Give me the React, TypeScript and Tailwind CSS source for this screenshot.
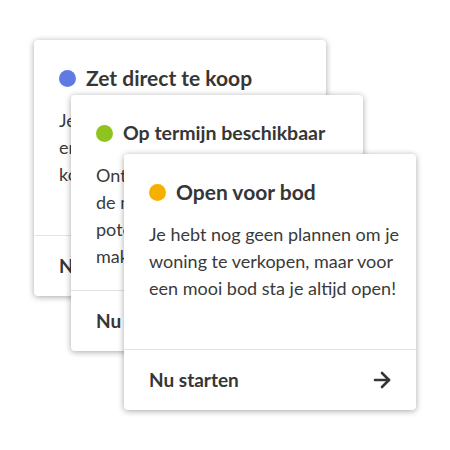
import { ArrowRight } from 'lucide-react'

type CardProps = {
  dot: string
  title: string
  titleSize: string
  lines: string[]
  offset: string
}

function Card({ dot, title, titleSize, lines, offset }: CardProps) {
  return (
    <div
      className={`col-start-1 row-start-1 flex h-[256px] w-[292px] flex-col overflow-hidden rounded-[4px] bg-white shadow-[0_1px_6px_rgba(0,0,0,0.35)] ${offset}`}
    >
      <div className="flex h-[52px] items-center gap-[10px] px-[25px] pt-6">
        <span className={`h-[17px] w-[17px] shrink-0 rounded-full ${dot}`} />
        <span className={`font-bold text-[#363636] ${titleSize}`}>{title}</span>
      </div>
      <p className="mt-[15px] flex-1 px-[25px] text-[18px] leading-[27px] text-[#3a3a3a]">
        {lines.map((l, i) => (
          <span key={i} className="block whitespace-nowrap">
            {l}
          </span>
        ))}
      </p>
      <div className="flex h-[61px] items-center justify-between border-t border-[#e3e3e3] pl-[25px] pr-[22px]">
        <span className="text-[19px] font-bold text-[#363636]">Nu starten</span>
        <ArrowRight size={24} strokeWidth={2.6} className="text-[#363636]" />
      </div>
    </div>
  )
}

export default function App() {
  return (
    <div className="grid h-[450px] w-[450px] items-start justify-items-start overflow-hidden bg-white font-['Lato',sans-serif]">
      <Card
        offset="ml-[34px] mt-[40px]"
        dot="bg-[#5f7be3]"
        title="Zet direct te koop"
        titleSize="text-[21px]"
        lines={['Je wilt je woning nu verkopen', 'en zoekt snel een geschikte', 'koper voor je huis.']}
      />
      <Card
        offset="ml-[71px] mt-[95px]"
        dot="bg-[#8fc31f]"
        title="Op termijn beschikbaar"
        titleSize="text-[19.5px]"
        lines={['Ontdek wat je woning waard is,', 'de markt en je kansen, vind', 'potentiële kopers en', 'maken je klaar voor verkoop.']}
      />
      <Card
        offset="ml-[124px] mt-[154px]"
        dot="bg-[#f6b100]"
        title="Open voor bod"
        titleSize="text-[21px]"
        lines={['Je hebt nog geen plannen om je', 'woning te verkopen, maar voor', 'een mooi bod sta je altijd open!']}
      />
    </div>
  )
}
